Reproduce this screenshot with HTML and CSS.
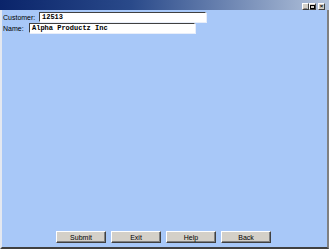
FILE: index.html
```html
<!DOCTYPE html>
<html lang="en">
<head>
    <meta charset="UTF-8">
    <title>Customer</title>
    <link rel="stylesheet" href="styles.css">
</head>
<body>
    <div class="window">
        <div class="titlebar">
            <div class="caption-buttons">
                <div class="cap-btn">_</div>
                <div class="cap-btn"><span class="max-box"></span></div>
                <div class="cap-btn close">&#215;</div>
            </div>
        </div>
        <div class="client">
            <div class="form">
                <div class="row">
                    <label class="label label-customer">Customer:</label>
                    <div class="field field-customer">12513</div>
                </div>
                <div class="row">
                    <label class="label label-name">Name:</label>
                    <div class="field field-name">Alpha Productz Inc</div>
                </div>
            </div>
            <div class="button-row">
                <button class="button">Submit</button>
                <button class="button">Exit</button>
                <button class="button">Help</button>
                <button class="button">Back</button>
            </div>
        </div>
    </div>
</body>
</html>
```

FILE: styles.css
```css
html, body {
    margin: 0;
    padding: 0;
}
body {
    width: 329px;
    height: 249px;
    overflow: hidden;
    font-family: 'Liberation Sans', Arial, sans-serif;
    font-size: 7px;
    background-color: #a8c8f8;
}
.window {
    display: flex;
    flex-direction: column;
    height: 249px;
}
.titlebar {
    height: 10px;
    display: flex;
    justify-content: flex-end;
    background: linear-gradient(to right, #0a246a, #2a4a8a 40%, #b4c4dc);
}
.caption-buttons {
    display: flex;
    padding-top: 3px;
    padding-right: 4px;
}
.cap-btn {
    width: 5px;
    height: 5px;
    background-color: #d4d0c8;
    border: 1px solid;
    border-color: #ffffff #404040 #404040 #ffffff;
    font-size: 6px;
    line-height: 5px;
    text-align: center;
    color: #000;
    overflow: hidden;
}
.cap-btn.close {
    margin-left: 2px;
    font-weight: bold;
}
.max-box {
    display: block;
    width: 3px;
    height: 2px;
    margin: 1px auto 0;
    border: 1px solid #000;
}
.client {
    flex: 1;
    display: flex;
    flex-direction: column;
    border-left: 2px solid #e4e8f0;
    border-right: 2px solid #808080;
    border-bottom: 2px solid #404040;
    padding-top: 2px;
    padding-bottom: 4px;
}
.form {
    display: flex;
    flex-direction: column;
    gap: 1px;
}
.row {
    display: flex;
    align-items: center;
    height: 10px;
}
.label {
    color: #000;
    padding-left: 1px;
}
.label-customer {
    width: 36px;
}
.label-name {
    width: 26px;
}
.field {
    box-sizing: border-box;
    height: 10px;
    background-color: #ffffff;
    border: 1px solid;
    border-color: #404040 #ffffff #ffffff #404040;
    box-shadow: 1px 1px 0 #e8eefa;
    font-family: 'Liberation Mono', 'Courier New', monospace;
    font-weight: bold;
    font-size: 7px;
    line-height: 8px;
    padding-left: 2px;
    color: #000;
}
.field-customer {
    width: 167px;
}
.field-name {
    width: 166px;
}
.button-row {
    margin-top: auto;
    display: flex;
    justify-content: center;
    gap: 5px;
    padding-right: 2px;
}
.button {
    box-sizing: border-box;
    width: 50px;
    height: 12px;
    padding: 0;
    font-family: 'Liberation Sans', Arial, sans-serif;
    font-size: 7px;
    color: #000;
    background-color: #d4d0c8;
    border: 1px solid;
    border-color: #ffffff #404040 #404040 #ffffff;
    box-shadow: inset -1px -1px 0 #808080;
}
```
